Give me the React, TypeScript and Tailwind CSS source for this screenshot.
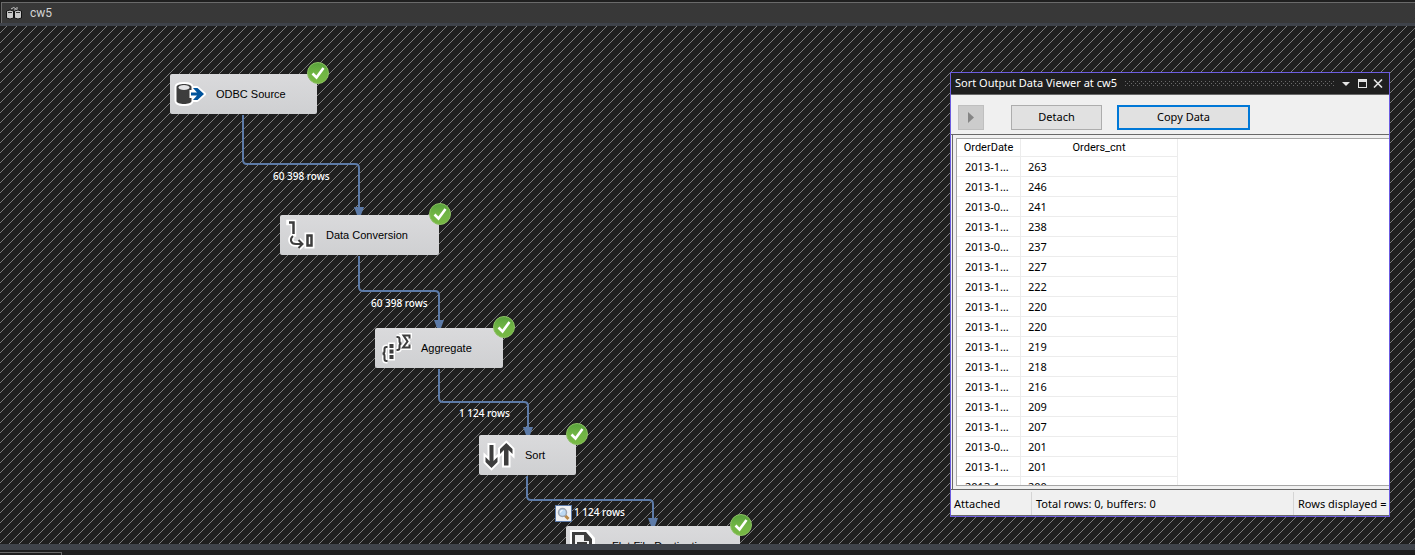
import React from "react";

const INK = "#3d3d3d";

function OdbcIcon() {
  return (
    <svg width="32" height="32" viewBox="0 0 32 32" aria-hidden="true">
      <g fill="#fff" stroke="#fff" strokeWidth="4" strokeLinejoin="round">
        <path d="M2.500 9c0-4 15-4 15 0v14c0 4-15 4-15 0z" />
        <path d="M17 14h5l-3-4h4l7 6-7 6h-4l3-4h-5z" />
      </g>
      <path d="M2.500 9c0-4 15-4 15 0v14c0 4-15 4-15 0z" fill={INK} />
      <ellipse cx="10" cy="9.5" rx="5.500" ry="2.5" fill="#e4e4e6" />
      <path d="M15.500 12h2.500v-3h5l8 7-8 7h-5v-3h-2.500z" fill="#fff" />
      <path d="M17 14.500h6l-4-4.500h4.500l6.500 6-6.500 6h-4.500l4-4.500h-6z" fill="#00539c" />
    </svg>
  );
}

function ConversionIcon() {
  const one = "M5 3.5h4.5V15";
  const zero = "M23.5 16.5h4v10h-4z";
  const bend = "M9 17c-3.500 3-2.500 8 3 8h6M14.500 21l4 4-4 4";
  return (
    <svg className="overflow-visible" width="32" height="32" viewBox="0 0 32 32" fill="none" aria-hidden="true">
      <g stroke="#fff" strokeWidth="6">
        <path d={one} strokeLinecap="square" strokeWidth="5.500" />
        <path d={bend} strokeWidth="5.500" />
        <path d={zero} />
      </g>
      <path d={one} stroke={INK} strokeWidth="2.500" />
      <path d={zero} stroke={INK} strokeWidth="2.500" />
      <path d={bend} stroke={INK} strokeWidth="2" />
    </svg>
  );
}

function AggregateIcon() {
  const left = "M8.500 15H7.500q-2 0-2 2v2q0 2.500-2 2.500q2 0 2 2.500v3q0 2 2 2h1";
  const right = "M17.500 5h1q2 0 2 2v2q0 2.500 2 2.500q-2 0-2 2.500v2q0 2-2 2h-1";
  const sum = "M30.500 6.500V3.500H24.500l4 6-4.500 6H30.500v-3";
  const dots = "M10.500 12h4v4h-4zM10.500 17.500h4v4h-4zM10.500 23h4v4h-4z";
  return (
    <svg className="overflow-visible" width="32" height="32" viewBox="0 0 32 32" fill="none" aria-hidden="true">
      <g stroke="#fff" strokeWidth="5">
        <path d={left} />
        <path d={right} />
        <path d={sum} />
        <path d={dots} strokeWidth="3" />
      </g>
      <g stroke={INK} strokeWidth="2">
        <path d={left} />
        <path d={right} />
        <path d={sum} />
      </g>
      <path d={dots} fill={INK} />
    </svg>
  );
}

function SortIcon() {
  const down = "M6.500 6h4v16l4-4v5L8.500 29 2.500 23v-5l4 4z";
  const up = "M21 26.500h4.500V11l4 4v-5L23.300 4 17 10v5l4-4z";
  return (
    <svg className="overflow-visible" width="32" height="32" viewBox="0 0 32 32" aria-hidden="true">
      <g fill="#fff" stroke="#fff" strokeWidth="4">
        <path d={down} />
        <path d={up} />
      </g>
      <g fill={INK}>
        <path d={down} />
        <path d={up} />
      </g>
    </svg>
  );
}

function FileIcon() {
  return (
    <svg width="32" height="32" viewBox="0 0 32 32" aria-hidden="true">
      <path d="M0 0h18l7 8v24H0z" fill="#fff" />
      <path d="M2 2h14l6 7v21H2z" fill={INK} />
      <path d="M5 5h9v6h5v16H5z" fill="#f0f0f0" />
      <path d="M7 12h10v2H7zM7 17h10v2H7z" fill={INK} />
    </svg>
  );
}

function SuccessBadge() {
  return (
    <svg className="absolute -top-3 -right-3" width="22" height="22" viewBox="0 0 22 22" role="img" aria-label="Succeeded">
      <defs>
        <linearGradient id="ok" x1="0" y1="0" x2="0" y2="1">
          <stop offset="0" stopColor="#57a13b" />
          <stop offset="0.500" stopColor="#71b545" />
          <stop offset="1" stopColor="#78b944" />
        </linearGradient>
      </defs>
      <circle cx="11" cy="11" r="10.500" fill="url(#ok)" stroke="#8cc063" />
      <path d="M5.500 11.500l4 4L16.500 6" fill="none" stroke="#fff" strokeWidth="2.600" />
    </svg>
  );
}

const nodes = [
  { label: "ODBC Source", icon: <OdbcIcon />, place: "left-[170px] top-[48px] w-[147px]" },
  { label: "Data Conversion", icon: <ConversionIcon />, place: "left-[280px] top-[189px] w-[159px]" },
  { label: "Aggregate", icon: <AggregateIcon />, place: "left-[375px] top-[302px] w-[128px]" },
  { label: "Sort", icon: <SortIcon />, place: "left-[479px] top-[409px] w-[97px]" },
  { label: "Flat File Destination", icon: <FileIcon />, place: "left-[566px] top-[500px] w-[174px]" },
];

const counts = [
  { text: "60 398 rows", place: "left-[273px] top-[143px]" },
  { text: "60 398 rows", place: "left-[371px] top-[270px]" },
  { text: "1 124 rows", place: "left-[459px] top-[380px]" },
  { text: "1 124 rows", place: "left-[574px] top-[479px]" },
];

const rows: [string, number][] = [
  ["2013-1…", 263],
  ["2013-1…", 246],
  ["2013-0…", 241],
  ["2013-1…", 238],
  ["2013-0…", 237],
  ["2013-1…", 227],
  ["2013-1…", 222],
  ["2013-1…", 220],
  ["2013-1…", 220],
  ["2013-1…", 219],
  ["2013-1…", 218],
  ["2013-1…", 216],
  ["2013-1…", 209],
  ["2013-1…", 207],
  ["2013-0…", 201],
  ["2013-1…", 201],
  ["2013-1…", 200],
];

function Edges() {
  return (
    <svg className="absolute inset-0 size-full" aria-hidden="true">
      <defs>
        <pattern id="hatch" width="10" height="10" patternUnits="userSpaceOnUse">
          <path
            fill="#7c7c7c"
            shapeRendering="crispEdges"
            d="M6 0h1v1h-1zM5 1h1v1h-1zM4 2h1v1h-1zM3 3h1v1h-1zM2 4h1v1h-1zM1 5h1v1h-1zM0 6h1v1h-1zM9 7h1v1h-1zM8 8h1v1h-1zM7 9h1v1h-1z"
          />
        </pattern>
      </defs>
      <rect width="100%" height="100%" fill="url(#hatch)" />
      <g fill="none" stroke="#5d7ba8" strokeWidth="2">
        <path d="M243 89v45q0 4 4 4h108q4 0 4 4v40" />
        <path d="M359 230v31q0 4 4 4h72q4 0 4 4v26" />
        <path d="M439 343v29q0 4 4 4h81q4 0 4 4v22" />
        <path d="M527 450v20q0 4 4 4h118q4 0 4 4v15" />
      </g>
      <g fill="#5d7ba8">
        <path d="M354 181h10l-3 8h-4z" />
        <path d="M434 294h10l-3 8h-4z" />
        <path d="M523 401h10l-3 8h-4z" />
        <path d="M648 492h10l-3 8h-4z" />
      </g>
    </svg>
  );
}

function ViewerIcon() {
  return (
    <svg className="absolute left-[555px] top-[479px]" width="17" height="17" viewBox="0 0 17 17" role="img" aria-label="Data viewer">
      <rect x="0.500" y="0.500" width="16" height="16" fill="#eef0f3" stroke="#5d7ba8" />
      <path d="M9.500 10l4 4" stroke="#b88746" strokeWidth="3" />
      <circle cx="7.500" cy="7.500" r="4" fill="#bcd9f3" stroke="#9aa3b0" strokeWidth="1.500" />
      <path d="M5.500 7.500q0-2 2-2" stroke="#fff" fill="none" />
    </svg>
  );
}

function DataViewer() {
  return (
    <section
      aria-label="Sort Output Data Viewer"
      className="absolute top-[46px] right-[25px] flex h-[445px] w-[440px] flex-col border border-[#6c5ce0] bg-[#f0f0f0] text-[11px] text-black"
    >
      <header className="flex h-[22px] shrink-0 items-center border-b border-[#686868] bg-[#1f1f1f] pr-[3px] pl-1 text-white">
        <h2 className="whitespace-nowrap">Sort Output Data Viewer at cw5</h2>
        <svg className="mr-1 ml-2 h-[5px] min-w-0 flex-1" aria-hidden="true">
          <defs>
            <pattern id="grip" width="4" height="4" patternUnits="userSpaceOnUse">
              <path d="M0 0h1v1H0zM2 2h1v1H2z" fill="#6a6a6a" shapeRendering="crispEdges" />
            </pattern>
          </defs>
          <rect width="100%" height="5" fill="url(#grip)" />
        </svg>
        <div className="flex items-center">
          <button aria-label="Window options" className="flex size-4 items-center justify-center">
            <svg width="8" height="4"><path d="M0 0h8L4 4z" fill="#e4e4e4" /></svg>
          </button>
          <button aria-label="Maximize" className="flex size-4 items-center justify-center">
            <svg width="9" height="9"><path d="M0 0h9v9H0zM1 3v5h7V3z" fill="#e4e4e4" fillRule="evenodd" /></svg>
          </button>
          <button aria-label="Close" className="flex size-4 items-center justify-center">
            <svg width="10" height="9"><path d="M1 0.500l8 8M9 0.500l-8 8" stroke="#e4e4e4" strokeWidth="1.600" /></svg>
          </button>
        </div>
      </header>

      <div className="flex h-10 shrink-0 items-start border-b border-[#686868] pt-[10px] pl-[7px]">
        <button aria-label="Continue" disabled className="flex h-[25px] w-[26px] items-center justify-center border border-[#bfbfbf] bg-[#cccccc]">
          <svg width="6" height="11"><path d="M0 0l6 5.500L0 11z" fill="#858585" /></svg>
        </button>
        <button className="ml-[27px] h-[25px] w-[91px] border border-[#adadad] bg-[#e1e1e1]">Detach</button>
        <button className="ml-[15px] h-[25px] w-[133px] border-2 border-[#0078d7] bg-[#e1e1e1]">Copy Data</button>
      </div>

      <div className="flex min-h-0 flex-1 pt-[3px] pb-[3px] pl-px">
        <div className="-my-[3px] w-1 shrink-0 border-l border-[#686868]" />
        <div className="min-w-0 flex-1 overflow-hidden border-y border-l border-[#a5a5a5] bg-white">
          <table className="w-[221px] table-fixed border-separate border-spacing-0 leading-4">
            <thead className="font-['Roboto',sans-serif]">
              <tr className="h-[18px]">
                <th className="h-[18px] w-16 border-r border-b border-[#ececec] p-0 font-normal">OrderDate</th>
                <th className="h-[18px] border-r border-b border-[#ececec] p-0 font-normal">Orders_cnt</th>
              </tr>
            </thead>
            <tbody>
              {rows.map(([date, count], i) => (
                <tr key={i} className="h-5">
                  <td className="border-r border-b border-[#ececec] p-0 pl-2">{date}</td>
                  <td className="border-r border-b border-[#ececec] p-0 pl-[7px]">{count}</td>
                </tr>
              ))}
            </tbody>
          </table>
        </div>
      </div>

      <footer className="flex h-[27px] shrink-0 items-stretch overflow-hidden border-t border-b border-[#686868] pt-[2px] leading-[23px] whitespace-nowrap">
        <span className="w-20 shrink-0 pl-[3px]">Attached</span>
        <span className="w-[262px] shrink-0 border-l border-[#d5d5d5] pl-1">Total rows: 0, buffers: 0</span>
        <span className="border-l border-[#d5d5d5] pl-1">Rows displayed =</span>
      </footer>
    </section>
  );
}

export default function App() {
  return (
    <div className="flex h-screen flex-col overflow-hidden bg-[#1f1f1f] font-['Noto_Sans',sans-serif]">
      <div className="shrink-0 pt-[2px] pl-px">
        <div className="flex h-[21px] items-center gap-2 border-t border-l border-[#6a6a6a] bg-[#383838] pl-1 font-['Roboto',sans-serif] text-xs text-[#d4d4d4]">
          <svg width="16" height="14" viewBox="0 0 16 14" aria-hidden="true">
            <path d="M5 3q3-3 5 0M8 4h3V1" fill="none" stroke="#c8c8c8" />
            <path d="M0.500 5q3.500-2 7 0v7q-3.500 2-7 0zM8.500 5q3.500-2 7 0v7q-3.500 2-7 0z" fill="#c8c8c8" stroke="#111" />
            <path d="M2 6.500h4M10 6.500h4" stroke="#333" />
          </svg>
          <span>cw5</span>
        </div>
      </div>
      <div className="h-[3px] shrink-0 bg-[#3f434a]" />

      <main className="relative min-h-0 flex-1 overflow-hidden">
        <Edges />
        {counts.map((c, i) => (
          <span key={i} className={`absolute text-[10px] leading-[15px] font-medium whitespace-nowrap text-white ${c.place}`}>
            {c.text}
          </span>
        ))}
        <ViewerIcon />
        {nodes.map((n) => (
          <div
            key={n.label}
            className={`absolute flex h-10 items-center gap-[10px] rounded-[2px] bg-linear-to-b from-[#dadadc] to-[#cfd0d2] pl-1 font-['Liberation_Sans',sans-serif] text-[11px] whitespace-nowrap text-black ${n.place}`}
          >
            {n.icon}
            <span>{n.label}</span>
            <SuccessBadge />
          </div>
        ))}
        <DataViewer />
      </main>

      <footer className="h-[11px] shrink-0 border-t-[6px] border-[#3f434a] pt-[2px]">
        <div className="h-[3px] w-[62px] border-t border-r border-[#6a6a6a]" />
      </footer>
    </div>
  );
}
